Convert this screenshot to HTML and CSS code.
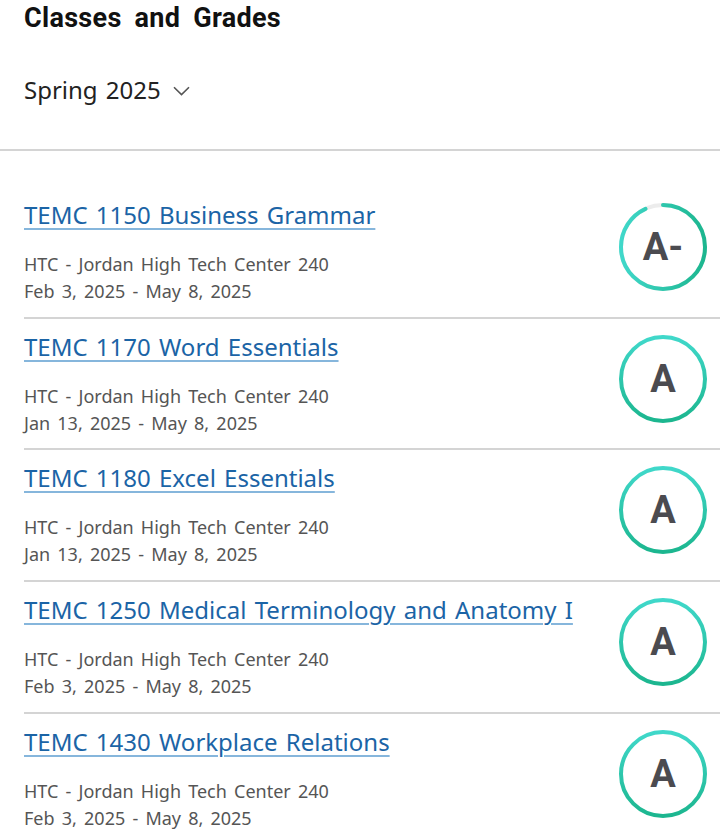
FILE: index.html
```html
<!DOCTYPE html>
<html lang="en">
  <head>
    <meta charset="UTF-8" />
    <meta name="viewport" content="width=device-width, initial-scale=1.0" />
    <title>Classes and Grades</title>
    <link rel="stylesheet" href="styles.css">
  </head>
  <body>
    <!-- gradient used by every grade ring -->
    <svg class="defs" width="0" height="0" aria-hidden="true">
      <defs>
        <linearGradient id="ring-grad" x1="0" y1="0" x2="0" y2="1">
          <stop offset="0" stop-color="#40d8ca" />
          <stop offset="1" stop-color="#1cb68f" />
        </linearGradient>
      </defs>
    </svg>

    <header class="page-header">
      <h1 class="page-title">Classes and Grades</h1>
      <button class="term-select" type="button">
        Spring 2025
        <svg class="chevron" width="17" height="10" viewBox="0 0 17 10">
          <path d="M1 1.2 L8.5 8.6 L16 1.2" fill="none" stroke="#555" stroke-width="1.6" />
        </svg>
      </button>
    </header>

    <ul class="class-list">
      <li class="class-row">
        <div class="class-info">
          <a class="class-name" href="#">TEMC 1150 Business Grammar</a>
          <p class="class-meta">HTC - Jordan High Tech Center 240</p>
          <p class="class-meta">Feb 3, 2025 - May 8, 2025</p>
        </div>
        <div class="grade">
          <svg class="ring" width="88" height="88" viewBox="0 0 88 88">
            <circle class="ring-track" cx="44" cy="44" r="42" />
            <!-- 93% of the ring, starting at 12 o'clock -->
            <circle class="ring-fill" cx="44" cy="44" r="42"
              stroke-dasharray="245.4 263.9" transform="rotate(-90 44 44)" />
          </svg>
          <span class="grade-letter">A-</span>
        </div>
      </li>
      <li class="class-row">
        <div class="class-info">
          <a class="class-name" href="#">TEMC 1170 Word Essentials</a>
          <p class="class-meta">HTC - Jordan High Tech Center 240</p>
          <p class="class-meta">Jan 13, 2025 - May 8, 2025</p>
        </div>
        <div class="grade">
          <svg class="ring" width="88" height="88" viewBox="0 0 88 88">
            <circle class="ring-fill" cx="44" cy="44" r="42" />
          </svg>
          <span class="grade-letter">A</span>
        </div>
      </li>
      <li class="class-row">
        <div class="class-info">
          <a class="class-name" href="#">TEMC 1180 Excel Essentials</a>
          <p class="class-meta">HTC - Jordan High Tech Center 240</p>
          <p class="class-meta">Jan 13, 2025 - May 8, 2025</p>
        </div>
        <div class="grade">
          <svg class="ring" width="88" height="88" viewBox="0 0 88 88">
            <circle class="ring-fill" cx="44" cy="44" r="42" />
          </svg>
          <span class="grade-letter">A</span>
        </div>
      </li>
      <li class="class-row">
        <div class="class-info">
          <a class="class-name" href="#">TEMC 1250 Medical Terminology and Anatomy I</a>
          <p class="class-meta">HTC - Jordan High Tech Center 240</p>
          <p class="class-meta">Feb 3, 2025 - May 8, 2025</p>
        </div>
        <div class="grade">
          <svg class="ring" width="88" height="88" viewBox="0 0 88 88">
            <circle class="ring-fill" cx="44" cy="44" r="42" />
          </svg>
          <span class="grade-letter">A</span>
        </div>
      </li>
      <li class="class-row">
        <div class="class-info">
          <a class="class-name" href="#">TEMC 1430 Workplace Relations</a>
          <p class="class-meta">HTC - Jordan High Tech Center 240</p>
          <p class="class-meta">Feb 3, 2025 - May 8, 2025</p>
        </div>
        <div class="grade">
          <svg class="ring" width="88" height="88" viewBox="0 0 88 88">
            <circle class="ring-fill" cx="44" cy="44" r="42" />
          </svg>
          <span class="grade-letter">A</span>
        </div>
      </li>
    </ul>
  </body>
</html>
```

FILE: styles.css
```css
/* Base page */
body {
  margin: 0;
  background: #fff;
  font-family: "Noto Sans", "Open Sans", sans-serif;
  color: #555;
  overflow: hidden;
}

.defs {
  position: absolute;
}

/* Header with title and term picker */
.page-header {
  border-bottom: 2px solid #d4d4d4;
  padding: 0 24px;
  height: 149px;
}

.page-title {
  margin: 0;
  padding-top: 2px;
  font-family: Roboto, "Liberation Sans", sans-serif;
  font-size: 27px;
  font-weight: bold;
  line-height: 32px;
  letter-spacing: 0.3px;
  word-spacing: 6px;
  color: #111;
}

.term-select {
  display: flex;
  align-items: center;
  gap: 12px;
  margin-top: 40px;
  padding: 0;
  border: none;
  background: none;
  font-family: "Noto Sans", "Open Sans", sans-serif;
  font-size: 24px;
  line-height: 32px;
  word-spacing: 2px;
  color: #222;
}

.chevron {
  margin-top: 2px;
}

/* Class rows */
.class-list {
  list-style: none;
  margin: 0;
  padding: 36px 0 0 0;
}

.class-row {
  display: flex;
  align-items: flex-start;
  justify-content: space-between;
  margin-left: 24px;
  padding-right: 13px;
  height: 131.7px;
  border-bottom: 2px solid #d4d4d4;
  box-sizing: border-box;
}

.class-row:last-child {
  border-bottom: none;
}

.class-info {
  padding-top: 12px;
}

.class-name {
  display: inline-block;
  font-size: 24px;
  line-height: 32px;
  word-spacing: 2px;
  color: #1b64a6;
  text-decoration: underline;
  text-decoration-color: #86b6dc;
  text-decoration-thickness: 2px;
  text-underline-offset: 4px;
}

.class-meta {
  margin: 0;
  font-size: 18px;
  line-height: 27px;
  word-spacing: 2.5px;
  color: #555;
}

.class-meta:first-of-type {
  margin-top: 20px;
}

/* Grade ring */
.grade {
  position: relative;
  width: 88px;
  height: 88px;
  margin-top: 16px;
}

.ring {
  display: block;
}

.ring-track {
  fill: none;
  stroke: #ececec;
  stroke-width: 4;
}

.ring-fill {
  fill: none;
  stroke: url(#ring-grad);
  stroke-width: 4;
  stroke-linecap: round;
}

.grade-letter {
  position: absolute;
  inset: 0;
  display: flex;
  align-items: center;
  justify-content: center;
  font-family: Roboto, "Liberation Sans", sans-serif;
  font-size: 38px;
  font-weight: bold;
  color: #4b4b50;
}
```
